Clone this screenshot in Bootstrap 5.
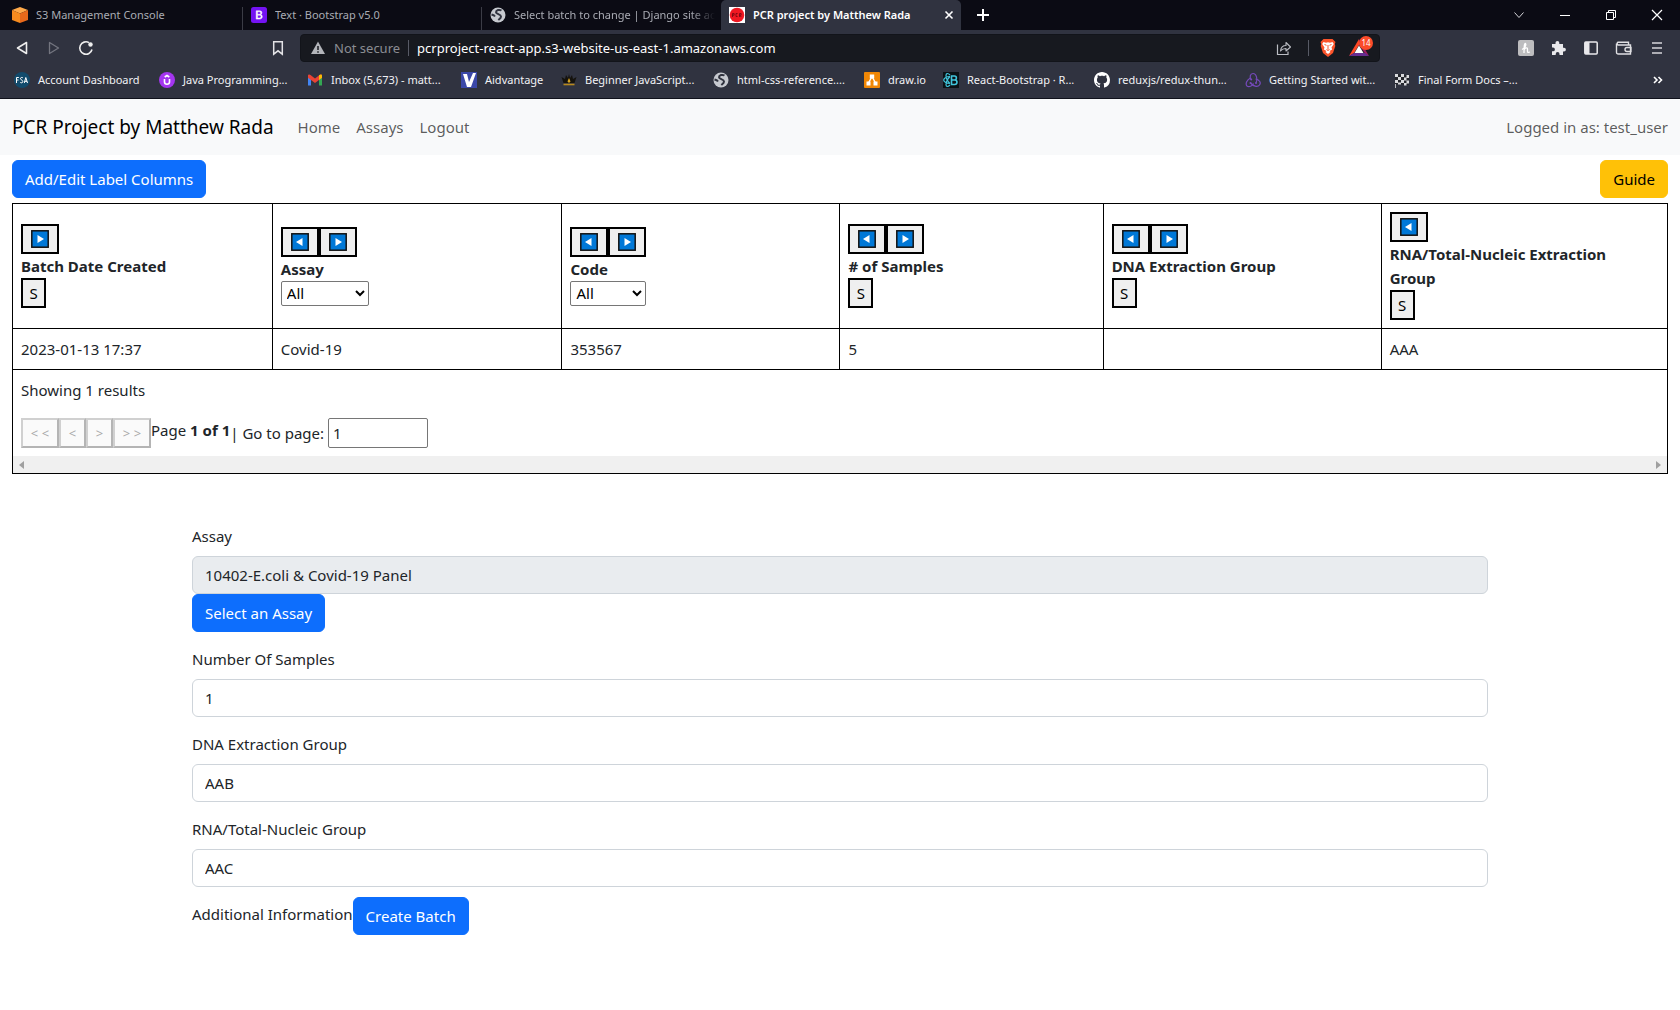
<!DOCTYPE html>
<html lang="en">
<head>
<meta charset="utf-8">
<meta name="viewport" content="width=device-width, initial-scale=1">
<title>PCR project by Matthew Rada</title>
<link href="https://cdn.jsdelivr.net/npm/bootstrap@5.3.0/dist/css/bootstrap.min.css" rel="stylesheet">
<style>
  body { font-family: "Noto Sans", "Open Sans", sans-serif; font-size: 15px; line-height: 24px; color: #212529; }
  .btn, .form-control { font-size: 15px; line-height: 24px; }
  button, select, input { font-family: inherit; }

  /* browser window frame */
  .browser { background: #303340; color: #f2f2f5; font-size: 11px; line-height: 16px; border-bottom: 1px solid #10121c; }
  .browser svg { display: block; flex: none; }
  .browser button { background: none; border: 0; padding: 0; color: inherit; }
  .tabstrip { background: #0b0b14; height: 30px; }
  .tab-item { width: 239px; padding: 0 4px 0 8px; height: 30px; gap: 8px; color: #a9abb3; }
  .tab-item.first { width: 243px; padding-left: 12px; }
  .tab-item.ruled { background: linear-gradient(#3b3c46, #3b3c46) right 7px / 1px 100% no-repeat; }
  .tab-item.active { width: 240px; background: #303340; color: #fff; border-radius: 5px 5px 0 0; font-weight: 600; padding-right: 7px; }
  .tab-title { white-space: nowrap; overflow: hidden; color: inherit; text-decoration: none; }
  .tab-title.faded { -webkit-mask-image: linear-gradient(90deg, #000 88%, transparent); mask-image: linear-gradient(90deg, #000 88%, transparent); }
  .win-controls { gap: 30px; padding-right: 15px; }
  .toolbar { height: 36px; padding: 0 15px 0 14px; }
  .nav-buttons { gap: 16px; width: 256px; }
  .address { background: #17191f; border: 1px solid #12141a; border-radius: 4px; height: 28px; padding: 0 2px 0 9px; width: 1080px; font-size: 13px; margin-left: 14px; }
  .address input { background: transparent; border: 0; color: #fff; outline: 0; padding: 0; min-width: 0; }
  .address label { color: #8b8d93; }
  .pipe { width: 1px; height: 16px; background: #585b66; }
  .tool-icons { gap: 16px; }
  .bookmarks { display: grid; grid-template-columns: 145px 148px 154px 100px 152px 151px 79px 151px 151px 149px 1fr auto; height: 32px; padding: 0 16px 4px 14px; align-items: center; }
  .bookmarks a { display: flex; align-items: center; gap: 8px; color: inherit; text-decoration: none; white-space: nowrap; }

  /* application */
  .app-nav { background: #f8f9fa; }
  .app-nav .navbar-brand { font-size: 19px; line-height: 30px; }
  .actions-row { padding: 5px 0; }
  .batch-grid { width: 100%; table-layout: fixed; border-collapse: collapse; color: #212529; }
  .batch-grid th, .batch-grid td { border: 1px solid #000; padding: 8px; vertical-align: middle; }
  .w-date { width: 15.7%; } .w-assay { width: 17.5%; } .w-code { width: 16.8%; }
  .w-samples { width: 15.9%; } .w-dna { width: 16.8%; }
  .long-title { max-width: 240px; }
  .move-group { display: flex; }
  .plain-btn { background: #efefef; border: 2px solid #000; padding: 1px 6px; height: 30px; color: #000; display: flex; align-items: center; justify-content: center; line-height: 24px; }
  .move-btn { width: 38px; }
  .sort-btn { width: 25px; }
  .filter { display: block; height: 25px; border: 1px solid #767676; border-radius: 2px; background: #fff; color: #000; padding: 0 0 0 1px; line-height: 20px; }
  .filter.wide { width: 88px; }
  .filter.narrow { width: 76px; }
  .grid-footer { border: 1px solid #000; border-top: 0; }
  .pager { padding: 8px; }
  .page-btn { background: #fafafa; border: 2px solid; border-color: #d0d0d0 #b4b4b4 #b4b4b4 #d0d0d0; height: 30px; color: #a9a9a9; padding: 0; font-size: 13px; line-height: 26px; width: 27px; }
  .page-btn.twin { width: 38px; }
  .page-input { width: 100px; height: 30px; border: 1px solid #767676; border-radius: 2px; padding: 1px 4px; color: #212529; }
  .page-count { padding-bottom: 6px; }
  .scroll-track { height: 17px; background: #f0f0f0; padding: 0 6px; }
  .scroll-track svg { display: block; }
  .batch-form { padding-top: 50px; }
  .field { margin-bottom: 15px; }
  .form-control { border-color: #ced4da; }
  .form-control:disabled { background: #e9ecef; color: #212529; opacity: 1; }
  .form-label { display: block; margin-bottom: 8px; }
  .field.last { margin-bottom: 10px; }
  .info-label { padding-bottom: 4px; }
</style>
</head>
<body>
<svg width="0" height="0" class="position-absolute" aria-hidden="true">
  <symbol id="globe" viewBox="0 0 16 16"><circle cx="8" cy="8" r="7.500" fill="#c6c9cf"/><path d="M11.500 3.500C9.500 2.300 6 3 6 5.200c0 2 5 1.800 5 4.300 0 1.700-1.500 2.500-2.700 3.500M1.500 7.500C3 8 4 8 5 9.500" fill="none" stroke="#30333f" stroke-width="2"/></symbol>
  <symbol id="go-left" viewBox="0 0 18 18"><rect x=".8" y=".8" width="16.400" height="16.400" fill="#0078d7" stroke="#111" stroke-width="1.500"/><path d="M11.500 5v8L5 9z" fill="#fff"/></symbol>
  <symbol id="go-right" viewBox="0 0 18 18"><rect x=".8" y=".8" width="16.400" height="16.400" fill="#0078d7" stroke="#111" stroke-width="1.500"/><path d="M6.500 5v8L13 9z" fill="#fff"/></symbol>
</svg>

<header class="browser">
  <div class="tabstrip d-flex">
    <div class="tab-item first ruled d-flex align-items-center">
      <svg width="16" height="16" viewBox="0 0 16 16"><path d="M8 0l8 3-8 3.500L0 3z" fill="#ffa94a"/><path d="M0 3l8 3.500V16l-8-3z" fill="#f68b1f"/><path d="M16 3L8 6.500V16l8-3z" fill="#e8691b"/></svg>
      <a href="#" class="tab-title">S3 Management Console</a>
    </div>
    <div class="tab-item ruled d-flex align-items-center">
      <svg width="16" height="16" viewBox="0 0 16 16"><rect width="16" height="16" rx="2.500" fill="#7413f3"/><path d="M5.200 3.800h3.400c1.500 0 2.300.7 2.300 1.900 0 .9-.5 1.600-1.300 1.900 1.100.2 1.700 1 1.700 2 0 1.500-1 2.500-2.700 2.500H5.200zM6.500 7.200h1.800c.9 0 1.400-.4 1.400-1.200s-.5-1.200-1.400-1.200H6.500zm0 3.800h2c1 0 1.500-.5 1.500-1.400s-.5-1.400-1.600-1.400H6.500z" fill="#fff" stroke="#fff" stroke-width=".5"/></svg>
      <a href="#" class="tab-title">Text · Bootstrap v5.0</a>
    </div>
    <div class="tab-item d-flex align-items-center pe-0">
      <svg width="16" height="16"><use href="#globe"/></svg>
      <a href="#" class="tab-title faded">Select batch to change | Django site ac</a>
    </div>
    <div class="tab-item active d-flex align-items-center">
      <svg width="16" height="16" viewBox="0 0 16 16"><rect width="16" height="16" fill="#fff"/><circle cx="8" cy="8" r="7.300" fill="#f01822"/><path d="M3.500 10V6.500h1.600v1.700H3.500M8.600 6.500H7v3h1.600M10.500 10V6.500h1.600v1.700h-1.600l1.800 1.800" fill="none" stroke="#6e0710" stroke-width=".8"/></svg>
      <a href="#" class="tab-title flex-grow-1">PCR project by Matthew Rada</a>
      <button type="button" aria-label="Close tab"><svg width="10" height="10" viewBox="0 0 10 10"><path d="M1.500 1.500l7 7M8.500 1.500l-7 7" stroke="#fff" stroke-width="1.600"/></svg></button>
    </div>
    <button type="button" aria-label="New tab" class="ms-3"><svg width="12" height="12" viewBox="0 0 12 12"><path d="M6 0v12M0 6h12" stroke="#fff" stroke-width="2"/></svg></button>
    <div class="win-controls d-flex align-items-center ms-auto">
      <button type="button" aria-label="Search tabs"><svg width="16" height="16" viewBox="0 0 16 16"><path d="M3.500 5.500L8 10.500l4.500-5" fill="none" stroke="#d6d6da"/></svg></button>
      <button type="button" aria-label="Minimize"><svg width="16" height="16" viewBox="0 0 16 16"><path d="M3 8.500h10" stroke="#fff"/></svg></button>
      <button type="button" aria-label="Restore"><svg width="16" height="16" viewBox="0 0 16 16"><path d="M3.500 5.500h7v7h-7zM5.500 5.500v-2h7v7h-2" fill="none" stroke="#fff"/></svg></button>
      <button type="button" aria-label="Close"><svg width="16" height="16" viewBox="0 0 16 16"><path d="M3 3l10 10M13 3L3 13" stroke="#fff" stroke-width="1.200"/></svg></button>
    </div>
  </div>

  <div class="toolbar d-flex align-items-center">
    <div class="nav-buttons d-flex align-items-center">
      <button type="button" aria-label="Back"><svg width="16" height="16" viewBox="0 0 16 16"><path d="M12.500 2.500v11L3.500 8z" fill="none" stroke="#eee" stroke-width="1.600" stroke-linejoin="round"/></svg></button>
      <button type="button" aria-label="Forward"><svg width="16" height="16" viewBox="0 0 16 16"><path d="M3.500 2.500v11L12.500 8z" fill="none" stroke="#73757f" stroke-width="1.300" stroke-linejoin="round"/></svg></button>
      <button type="button" aria-label="Reload"><svg width="16" height="16" viewBox="0 0 16 16"><path d="M11 2.600A6.200 6.200 0 1 0 14 9.500" fill="none" stroke="#eee" stroke-width="1.600"/><circle cx="12.500" cy="4.500" r="2.200" fill="#eee"/></svg></button>
    </div>
    <button type="button" aria-label="Bookmark this page"><svg width="16" height="16" viewBox="0 0 16 16"><path d="M3.700 1.700h8.600v12.500L8 10.800l-4.300 3.400z" fill="none" stroke="#e3e3e6" stroke-width="1.500"/></svg></button>
    <div class="address d-flex align-items-center">
      <svg width="16" height="16" viewBox="0 0 16 16"><path d="M8 1.500l7 12.500H1z" fill="#b3b5ba"/><path d="M8 6v4M8 11.200v1.500" stroke="#17191f" stroke-width="1.500"/></svg>
      <label for="url" class="ms-2">Not secure</label>
      <span class="pipe mx-2"></span>
      <input id="url" type="text" class="flex-grow-1" value="pcrproject-react-app.s3-website-us-east-1.amazonaws.com">
      <svg width="16" height="16" viewBox="0 0 16 16"><path d="M1.500 4.500v10h10.500v-3" fill="none" stroke="#bbbdc3" stroke-width="1.200"/><path d="M4.500 11C5 7 7 5.500 10 5.500V2.500l4.500 4.500L10 11V8.500C7.500 8.500 6 9 4.500 11z" fill="none" stroke="#bbbdc3" stroke-width="1.100" stroke-linejoin="round"/></svg>
      <span class="pipe ms-3 me-2"></span>
      <svg width="22" height="20" viewBox="0 0 22 20"><path d="M6.500 1h9l3 3-.7 2 .5 2-2.300 7L11 19l-5-4-2.300-7 .5-2-.7-2z" fill="#fb542b"/><path d="M6.500 4l2.500.7 2-.5 2 .5 2.500-.7 1.300 2-2.300 3.500.7 2L12.500 13l1 1-2.500 2-2.500-2 1-1-2.700-1.500.7-2L5.200 6z" fill="#fff"/><path d="M7.500 6.500l2 .8M14.500 6.500l-2 .8M11 7v4.500M9.500 11.500l1.500 1 1.500-1" stroke="#fb542b" fill="none"/></svg>
      <svg width="30" height="28" viewBox="0 0 30 28" class="ms-2"><path d="M12 5l10 17-4-2.500-6-9z" fill="#9e1f63"/><path d="M12 5v6L7 19l-5 3z" fill="#ff4724"/><path d="M2 22h20l-4-3H7z" fill="#662d91"/><path d="M12 11.500L16.500 19h-9z" fill="#fff"/><circle cx="19" cy="9" r="7" fill="#fb4c2a"/><text x="19" y="12" font-size="8" fill="#fff" text-anchor="middle">14</text></svg>
    </div>
    <div class="tool-icons d-flex align-items-center ms-auto">
      <button type="button" aria-label="Honey"><svg width="16" height="16" viewBox="0 0 16 16"><rect width="16" height="16" rx="2" fill="#bdbdbf"/><path d="M4 9.500C7 8 8.500 5 7.500 3.500 6.500 3 6 6 6 13M6 10c1-2.500 3.500-3 3.500-.8C9.500 12 9 13 12 12" fill="none" stroke="#fff" stroke-width="1.300"/></svg></button>
      <button type="button" aria-label="Extensions"><svg width="17" height="16" viewBox="0 0 17 16"><path d="M2 4h3.500V2.800a1.900 1.900 0 0 1 3.800 0V4H13v3.700h1a1.900 1.900 0 0 1 0 3.800h-1V15H9.500v-1a1.900 1.900 0 0 0-3.800 0v1H2v-3.700h1a1.900 1.900 0 0 0 0-3.800H2z" fill="#e9e9ec"/></svg></button>
      <button type="button" aria-label="Sidebar"><svg width="16" height="16" viewBox="0 0 16 16"><rect x="1.800" y="2" width="12.400" height="12" rx="1" fill="none" stroke="#e9e9ec" stroke-width="1.500"/><path d="M2 2h4.500v12H2z" fill="#e9e9ec"/></svg></button>
      <button type="button" aria-label="Wallet"><svg width="18" height="16" viewBox="0 0 18 16"><path d="M13.500 4.500V2.200H3a1.600 1.600 0 0 0 0 2.800h12.500v9H3.500C2 14 1.500 13.500 1.500 12V3.500M16 7.500h-4a2 2 0 0 0 0 4h4z" fill="none" stroke="#e0e0e3" stroke-width="1.400"/></svg></button>
      <button type="button" aria-label="Menu"><svg width="16" height="16" viewBox="0 0 16 16"><path d="M3 3h10M3 8h10M3 13h10" stroke="#d6d6da" stroke-width="1.600"/></svg></button>
    </div>
  </div>

  <nav class="bookmarks" aria-label="Bookmarks">
    <a href="#"><svg width="16" height="16" viewBox="0 0 16 16"><circle cx="8" cy="8" r="8" fill="#124b6c"/><path d="M2.500 11V5.500h2.300M2.500 8h2M8.800 5.700C7 5 6.200 6 6.500 7s2.300 1 2.300 2.500-1.500 1.500-2.500 1M10.300 11l1.500-5.500 1.700 5.500M10.800 9.300h2.300" fill="none" stroke="#fff"/></svg>Account Dashboard</a>
    <a href="#"><svg width="16" height="16" viewBox="0 0 16 16"><circle cx="8" cy="8" r="8" fill="#a435f0"/><path d="M5.500 7v3c0 3 5 3 5 0V7M5.700 5L8 3.500 10.300 5" fill="none" stroke="#fff" stroke-width="1.600"/></svg>Java Programming...</a>
    <a href="#"><svg width="16" height="16" viewBox="0 0 16 16"><path d="M1 4v9.500h3V6z" fill="#4285f4"/><path d="M15 4v9.500h-3V6z" fill="#34a853"/><path d="M1 3.500C1 2.500 2.500 2 3.500 3L8 6.500 12.500 3c1-1 2.500-.5 2.500.5v2.300L8 11 1 5.800z" fill="#ea4335"/><path d="M12 3.300c1.500-1.300 3-.8 3 .5v2l-3 2.200z" fill="#fbbc04"/></svg>Inbox (5,673) - matt...</a>
    <a href="#"><svg width="16" height="16" viewBox="0 0 16 16"><rect width="16" height="16" fill="#3b48a8"/><path d="M2 2h4l2 8 4-9h3L10 15H6z" fill="#fff"/></svg>Aidvantage</a>
    <a href="#"><svg width="16" height="16" viewBox="0 0 16 16"><path d="M2.500 11L.5 5 4 7l1-4 2 3 1-4 1 4 2-3 1 4 3.500-2-2 6z" fill="#15130e"/><path d="M2.500 12.500h11" stroke="#b8891d" stroke-width="1.600"/><path d="M8 6l1.500 3.500L8 11 6.500 9.500z" fill="#d9a520"/></svg>Beginner JavaScript...</a>
    <a href="#"><svg width="16" height="16"><use href="#globe"/></svg>html-css-reference....</a>
    <a href="#"><svg width="16" height="16" viewBox="0 0 16 16"><rect width="16" height="16" rx="1" fill="#f08705"/><path d="M8 4.500L4.500 11M8 4.500l3.500 6.500" stroke="#fff" stroke-width="1.400"/><path d="M5.800 2.500h4.400v4H5.800zM2.500 9.500h4v4h-4zM9.500 9.500h4v4h-4z" fill="#fff"/></svg>draw.io</a>
    <a href="#"><svg width="16" height="16" viewBox="0 0 16 16"><rect width="16" height="16" fill="#0c1216"/><g fill="none" stroke="#41c5dc" stroke-width="1.200"><path d="M7 4.500C3 4.500.7 6.500.7 8S3 11.500 7 11.500M7 3C4.500.5 3 1.500 3 3.500c0 2.500 2 6 4 8M7 13c-2.500 2.500-4 1.500-4-.5 0-2.500 2-6 4-8"/><path d="M8.500 4v8.500h3.200c3 0 3-4.300.3-4.500H8.500h3c2.500 0 2.500-4 0-4z" stroke-width="1.600"/></g></svg>React-Bootstrap · R...</a>
    <a href="#"><svg width="16" height="16" viewBox="0 0 16 16"><path fill="#fff" d="M8 0C3.580 0 0 3.580 0 8c0 3.540 2.290 6.530 5.470 7.590.4.070.55-.17.55-.38 0-.19-.01-.82-.01-1.490-2.010.37-2.530-.49-2.690-.94-.09-.23-.48-.94-.82-1.130-.28-.15-.68-.52-.01-.53.63-.01 1.080.58 1.230.82.72 1.210 1.870.87 2.330.66.070-.52.280-.87.510-1.070-1.780-.2-3.640-.89-3.640-3.950 0-.87.310-1.590.82-2.150-.08-.2-.36-1.020.08-2.120 0 0 .67-.21 2.200.82.64-.18 1.320-.27 2-.27s1.360.09 2 .27c1.530-1.040 2.200-.82 2.200-.82.44 1.100.16 1.920.08 2.120.51.56.82 1.270.82 2.150 0 3.070-1.870 3.750-3.650 3.950.29.25.54.73.54 1.480 0 1.070-.01 1.930-.01 2.200 0 .21.15.46.55.38A8.010 8.010 0 0 0 16 8c0-4.420-3.580-8-8-8"/></svg>reduxjs/redux-thun...</a>
    <a href="#"><svg width="16" height="16" viewBox="0 0 16 16"><g fill="none" stroke="#764abc" stroke-width="1.200"><path d="M11 11c2-3 .5-9.500-3-9.500C5 1.500 4.500 5 6 7.500"/><path d="M5.500 6C2 7.500 0 12 2 14c2 1.500 5.500 0 6.500-2.500"/><path d="M5.500 11c2.500 3 7 4.500 9 2s-.5-5.500-4-6"/></g><circle cx="11" cy="11" r="1" fill="#764abc"/><circle cx="5.500" cy="11" r="1" fill="#764abc"/><circle cx="6.200" cy="7.500" r="1" fill="#764abc"/></svg>Getting Started wit...</a>
    <a href="#"><svg width="16" height="16" viewBox="0 0 16 16"><path d="M1 2.500c4-2 9 2 14 0v10c-5 2-9-2-13 0V16H1z" fill="#24262c"/><path d="M1 2h3v3H1zM7 2h3v3H7zM12.500 3H15v3h-2.500zM4 5h3v3H4zM10 5.500h2.500v3H10zM1 8h3v3H1zM7 8h3v3H7zM12.500 8.500H15v3h-2.500zM4 10.500h3v2H4zM10 11h2.500v2.500H10zM1 12h.8v4H1z" fill="#d9dadd"/></svg>Final Form Docs –...</a>
    <button type="button" aria-label="More bookmarks"><svg width="12" height="12" viewBox="0 0 12 12"><path d="M2 3l3 3-3 3M6.500 3l3 3-3 3" fill="none" stroke="#fff" stroke-width="1.600"/></svg></button>
  </nav>
</header>

<nav class="navbar navbar-expand navbar-light app-nav">
  <div class="container-fluid">
    <a class="navbar-brand" href="#">PCR Project by Matthew Rada</a>
    <ul class="navbar-nav me-auto">
      <li class="nav-item"><a class="nav-link" href="#">Home</a></li>
      <li class="nav-item"><a class="nav-link" href="#">Assays</a></li>
      <li class="nav-item"><a class="nav-link" href="#">Logout</a></li>
    </ul>
    <span class="navbar-text">Logged in as: test_user</span>
  </div>
</nav>

<main>
  <section class="container-fluid">
    <div class="actions-row d-flex justify-content-between">
      <button type="button" class="btn btn-primary">Add/Edit Label Columns</button>
      <button type="button" class="btn btn-warning">Guide</button>
    </div>
    <table class="batch-grid">
      <colgroup><col class="w-date"><col class="w-assay"><col class="w-code"><col class="w-samples"><col class="w-dna"><col></colgroup>
      <thead>
        <tr>
          <th scope="col">
            <div class="move-group"><button type="button" class="plain-btn move-btn" aria-label="Move right"><svg width="18" height="18"><use href="#go-right"/></svg></button></div>
            <div>Batch Date Created</div>
            <button type="button" class="plain-btn sort-btn">S</button>
          </th>
          <th scope="col">
            <div class="move-group"><button type="button" class="plain-btn move-btn" aria-label="Move left"><svg width="18" height="18"><use href="#go-left"/></svg></button><button type="button" class="plain-btn move-btn" aria-label="Move right"><svg width="18" height="18"><use href="#go-right"/></svg></button></div>
            <label for="filter-assay" class="d-block">Assay</label>
            <select id="filter-assay" class="filter wide"><option>All</option></select>
          </th>
          <th scope="col">
            <div class="move-group"><button type="button" class="plain-btn move-btn" aria-label="Move left"><svg width="18" height="18"><use href="#go-left"/></svg></button><button type="button" class="plain-btn move-btn" aria-label="Move right"><svg width="18" height="18"><use href="#go-right"/></svg></button></div>
            <label for="filter-code" class="d-block">Code</label>
            <select id="filter-code" class="filter narrow"><option>All</option></select>
          </th>
          <th scope="col">
            <div class="move-group"><button type="button" class="plain-btn move-btn" aria-label="Move left"><svg width="18" height="18"><use href="#go-left"/></svg></button><button type="button" class="plain-btn move-btn" aria-label="Move right"><svg width="18" height="18"><use href="#go-right"/></svg></button></div>
            <div># of Samples</div>
            <button type="button" class="plain-btn sort-btn">S</button>
          </th>
          <th scope="col">
            <div class="move-group"><button type="button" class="plain-btn move-btn" aria-label="Move left"><svg width="18" height="18"><use href="#go-left"/></svg></button><button type="button" class="plain-btn move-btn" aria-label="Move right"><svg width="18" height="18"><use href="#go-right"/></svg></button></div>
            <div>DNA Extraction Group</div>
            <button type="button" class="plain-btn sort-btn">S</button>
          </th>
          <th scope="col">
            <div class="move-group"><button type="button" class="plain-btn move-btn" aria-label="Move left"><svg width="18" height="18"><use href="#go-left"/></svg></button></div>
            <div class="long-title">RNA/Total-Nucleic Extraction Group</div>
            <button type="button" class="plain-btn sort-btn">S</button>
          </th>
        </tr>
      </thead>
      <tbody>
        <tr><td>2023-01-13 17:37</td><td>Covid-19</td><td>353567</td><td>5</td><td></td><td>AAA</td></tr>
      </tbody>
    </table>
    <div class="grid-footer">
      <div class="pager">
        <p class="mb-3">Showing 1 results</p>
        <div class="d-flex align-items-center">
          <button type="button" class="page-btn twin" disabled>&lt; &lt;</button>
          <button type="button" class="page-btn" disabled>&lt;</button>
          <button type="button" class="page-btn" disabled>&gt;</button>
          <button type="button" class="page-btn twin" disabled>&gt; &gt;</button>
          <span class="page-count">Page <strong>1 of 1</strong></span>
          <label for="goto">| Go to page:</label>
          <input id="goto" type="text" class="page-input ms-1" value="1">
        </div>
      </div>
      <div class="scroll-track d-flex justify-content-between align-items-center">
        <svg width="5" height="8" viewBox="0 0 5 8"><path d="M5 0v8L0 4z" fill="#a0a0a0"/></svg>
        <svg width="5" height="8" viewBox="0 0 5 8"><path d="M0 0v8l5-4z" fill="#a0a0a0"/></svg>
      </div>
    </div>
  </section>

  <form class="container batch-form">
    <div class="field">
      <label for="assay" class="form-label">Assay</label>
      <input id="assay" type="text" class="form-control" value="10402-E.coli &amp; Covid-19 Panel" disabled>
      <button type="button" class="btn btn-primary">Select an Assay</button>
    </div>
    <div class="field">
      <label for="samples" class="form-label">Number Of Samples</label>
      <input id="samples" type="text" class="form-control" value="1">
    </div>
    <div class="field">
      <label for="dna" class="form-label">DNA Extraction Group</label>
      <input id="dna" type="text" class="form-control" value="AAB">
    </div>
    <div class="field last">
      <label for="rna" class="form-label">RNA/Total-Nucleic Group</label>
      <input id="rna" type="text" class="form-control" value="AAC">
    </div>
    <div class="d-flex align-items-center">
      <span class="info-label">Additional Information</span>
      <button type="button" class="btn btn-primary">Create Batch</button>
    </div>
  </form>
</main>
<script src="https://cdn.jsdelivr.net/npm/bootstrap@5.3.0/dist/js/bootstrap.bundle.min.js"></script>
</body>
</html>
